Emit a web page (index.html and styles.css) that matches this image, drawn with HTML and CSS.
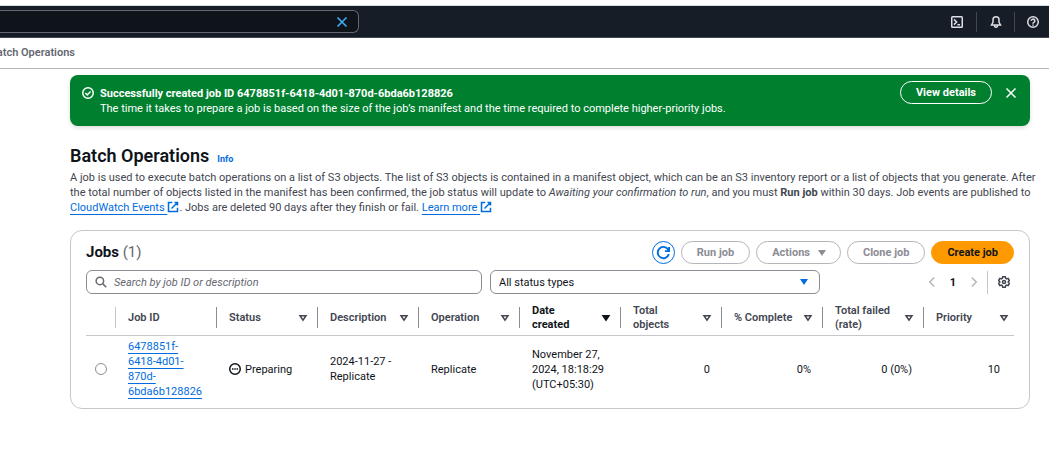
FILE: index.html
```html
<!DOCTYPE html>
<html lang="en">
<head>
<meta charset="utf-8">
<title>Batch Operations</title>
<link rel="stylesheet" href="styles.css">
</head>
<body>
<svg class="sprite" aria-hidden="true">
  <symbol id="close" viewBox="0 0 16 16"><path d="m2 2 12 12M14 2 2 14"/></symbol>
  <symbol id="external" viewBox="0 0 16 16"><path d="M10 2h4v4M6 10l8-8M14 9.050V14H2V2h5"/></symbol>
  <symbol id="sort" viewBox="0 0 16 16"><path d="M4 5h8l-4 6z"/></symbol>
  <symbol id="caret" viewBox="0 0 16 16"><path d="M4 5h8l-4 6z" fill="currentColor"/></symbol>
</svg>

<header class="topbar">
  <div class="topbar-search">
    <input class="topbar-input" type="text" aria-label="Search services">
    <button class="icon-button topbar-clear" aria-label="Clear search"><svg class="icon"><use href="#close"/></svg></button>
  </div>
  <div class="topbar-tools">
    <button class="icon-button tool" aria-label="CloudShell"><svg class="icon" viewBox="0 0 16 16"><rect x="1" y="1" width="14" height="14" rx="1"/><path d="m4 4.500 3.500 3.500L4 11.500M8.500 11.500H12"/></svg></button>
    <button class="icon-button tool" aria-label="Notifications"><svg class="icon" viewBox="0 0 16 16"><path d="M8 1a4 4 0 0 0-4 4v3.500L2 12h12l-2-3.500V5a4 4 0 0 0-4-4zM6 12v1a2 2 0 0 0 4 0v-1"/></svg></button>
    <button class="icon-button tool" aria-label="Help"><svg class="icon" viewBox="0 0 16 16"><circle cx="8" cy="8" r="7"/><path d="M5.500 6.500a2.500 2.300 0 1 1 3.700 2C8.300 9 8 9.300 8 10.200M8 11.200V13"/></svg></button>
  </div>
</header>

<nav class="breadcrumb" aria-label="Breadcrumb"><div class="breadcrumb-clip"><span>Batch Operations</span></div></nav>

<main class="content">
  <section class="flash" role="status">
    <svg class="icon flash-icon" viewBox="0 0 16 16"><circle cx="8" cy="8" r="7"/><path d="m4.500 8 2.500 2.500L11.500 6"/></svg>
    <div class="flash-text">
      <strong>Successfully created job ID 6478851f-6418-4d01-870d-6bda6b128826</strong>
      <p>The time it takes to prepare a job is based on the size of the job’s manifest and the time required to complete higher-priority jobs.</p>
    </div>
    <button class="button flash-action">View details</button>
    <button class="icon-button flash-close" aria-label="Dismiss"><svg class="icon"><use href="#close"/></svg></button>
  </section>

  <div class="page-title">
    <h1>Batch Operations</h1>
    <a class="info" href="#info">Info</a>
  </div>
  <p class="intro">A job is used to execute batch operations on a list of S3 objects. The list of S3 objects is contained in a manifest object, which can be an S3 inventory report or a list of objects that you generate. After the total number of objects listed in the manifest has been confirmed, the job status will update to <em>Awaiting your confirmation to run</em>, and you must <strong>Run job</strong> within 30 days. Job events are published to <a class="link" href="#events">CloudWatch Events <svg class="icon external"><use href="#external"/></svg></a>. Jobs are deleted 90 days after they finish or fail. <a class="link" href="#learn">Learn more <svg class="icon external"><use href="#external"/></svg></a></p>

  <section class="card">
    <div class="card-header">
      <h2>Jobs <span class="count">(1)</span></h2>
      <div class="actions">
        <button class="button refresh" aria-label="Refresh"><svg class="icon icon-refresh" viewBox="0 0 16 16"><path d="M14 2v4.500H9.500M13.700 9.500A6 6 0 1 1 13.500 6"/></svg></button>
        <button class="button" disabled>Run job</button>
        <button class="button button-menu" disabled>Actions <svg class="caret"><use href="#caret"/></svg></button>
        <button class="button" disabled>Clone job</button>
        <button class="button primary">Create job</button>
      </div>
    </div>

    <div class="filters">
      <div class="field field-search">
        <svg class="icon search-icon" viewBox="0 0 16 16"><circle cx="6.500" cy="6.500" r="5"/><path d="m10.500 10.500 4.500 4.500"/></svg>
        <input class="control" type="search" placeholder="Search by job ID or description" aria-label="Search jobs">
      </div>
      <div class="field field-select">
        <select class="control" aria-label="Status filter"><option>All status types</option></select>
        <svg class="caret select-caret"><use href="#caret"/></svg>
      </div>
      <div class="pagination">
        <button class="icon-button page-arrow" disabled aria-label="Previous page"><svg class="icon" viewBox="0 0 16 16"><path d="M11 2 5 8l6 6"/></svg></button>
        <button class="page-number">1</button>
        <button class="icon-button page-arrow" disabled aria-label="Next page"><svg class="icon" viewBox="0 0 16 16"><path d="m5 2 6 6-6 6"/></svg></button>
        <button class="icon-button settings" aria-label="Preferences"><svg class="icon" viewBox="0 0 16 16"><path d="M6.300 1h3.400l.5 2 1.300.8 2-.6 1.700 2.900L13.700 7.500v1l1.500 1.400-1.700 2.900-2-.6-1.300.8-.5 2H6.300l-.5-2-1.300-.8-2 .6L.8 9.900l1.500-1.400v-1L.8 6.100l1.700-2.900 2 .6L5.800 3z"/><circle cx="8" cy="8" r="2"/></svg></button>
      </div>
    </div>

    <table class="jobs">
      <colgroup><col class="col-pick"><col class="col"><col class="col"><col class="col"><col class="col"><col class="col"><col class="col"><col class="col"><col class="col"><col></colgroup>
      <thead>
        <tr>
          <th><div class="head"></div></th>
          <th><div class="head">Job ID</div></th>
          <th><div class="head">Status <svg class="icon sort"><use href="#sort"/></svg></div></th>
          <th><div class="head">Description <svg class="icon sort"><use href="#sort"/></svg></div></th>
          <th><div class="head">Operation <svg class="icon sort"><use href="#sort"/></svg></div></th>
          <th class="sorted" aria-sort="descending"><div class="head">Date created <svg class="icon sort"><use href="#caret"/></svg></div></th>
          <th><div class="head">Total objects <svg class="icon sort"><use href="#sort"/></svg></div></th>
          <th><div class="head">% Complete <svg class="icon sort"><use href="#sort"/></svg></div></th>
          <th><div class="head">Total failed (rate) <svg class="icon sort"><use href="#sort"/></svg></div></th>
          <th><div class="head">Priority <svg class="icon sort"><use href="#sort"/></svg></div></th>
        </tr>
      </thead>
      <tbody>
        <tr>
          <td class="pick"><input class="radio" type="radio" name="job" aria-label="Select job"></td>
          <td><a class="link" href="#job">6478851f-6418-4d01-870d-6bda6b128826</a></td>
          <td><span class="status"><svg class="icon" viewBox="0 0 16 16"><circle cx="8" cy="8" r="7"/><path d="M4 8h2M7 8h2M10 8h2"/></svg>Preparing</span></td>
          <td>2024-11-27 - Replicate</td>
          <td>Replicate</td>
          <td>November 27, 2024, 18:18:29 (UTC+05:30)</td>
          <td class="num">0</td>
          <td class="num">0%</td>
          <td class="num">0 (0%)</td>
          <td class="num">10</td>
        </tr>
      </tbody>
    </table>
  </section>
</main>
</body>
</html>
```

FILE: styles.css
```css
* { box-sizing: border-box; }
body {
  margin: 0;
  padding-top: 5px;
  background: #fff;
  color: #0f141a;
  font: 11px/15px Roboto, "Open Sans", sans-serif;
}
h1, h2, p { margin: 0; }
button, input, select { font: inherit; color: inherit; }
button { cursor: pointer; }
.sprite { position: absolute; width: 0; height: 0; }
.icon {
  flex: none;
  width: 12px;
  height: 12px;
  fill: none;
  stroke: currentColor;
  stroke-width: 2;
}
.icon-button {
  display: flex;
  align-items: center;
  justify-content: center;
  padding: 0;
  border: 0;
  background: none;
}

.topbar {
  display: flex;
  align-items: center;
  justify-content: space-between;
  height: 33px;
  border-top: 1px solid #d5dfe0;
  border-bottom: 1px solid #424650;
  background: #161d26;
}
.topbar-search {
  display: flex;
  width: 359px;
  height: 23px;
  padding-right: 10px;
  border: 1px solid #656871;
  border-left: 0;
  border-radius: 0 6px 6px 0;
  background: #0f141a;
}
.topbar-input {
  flex: 1;
  min-width: 0;
  border: 0;
  outline: 0;
  background: none;
  color: #fff;
}
.topbar-clear { color: #42b4ff; }
.topbar-tools { display: flex; padding-right: 10px; color: #dedee3; }
.tool { width: 38px; height: 20px; }
.tool + .tool { border-left: 1px solid #424650; }
.tool:last-child { width: 25px; justify-content: flex-end; }

.breadcrumb {
  height: 31px;
  padding-top: 7px;
  border-bottom: 1px solid #b4b4bb;
  color: #656871;
  font-weight: 600;
}
.breadcrumb-clip {
  display: flex;
  justify-content: flex-end;
  width: 75px;
  overflow: hidden;
  white-space: nowrap;
}

.content { padding: 6px 19px 0 70px; }
.flash {
  display: flex;
  align-items: flex-start;
  padding: 6px 12px 10px;
  border-radius: 8px;
  background: #00802f;
  color: #fff;
  box-shadow: 0 2px 4px #0002;
}
.flash-icon { margin-top: 6px; }
.flash-text { flex: 1; padding: 5px 0 0 6px; }
.flash-text strong { display: block; font-weight: 700; }
.flash-close { width: 14px; height: 23px; margin-left: 12px; }

.button {
  display: flex;
  align-items: center;
  gap: 4px;
  height: 23px;
  padding: 0 15px;
  border: 1px solid #006ce0;
  border-radius: 12px;
  background: #fff;
  font-weight: 700;
  white-space: nowrap;
}
.button:disabled { border-color: #b4b4bb; color: #8c8c94; cursor: default; }
.button.primary { border-color: #f90; background: #f90; }
.button-menu { padding-right: 10px; }
.button.refresh { justify-content: center; width: 23px; padding: 0; color: #006ce0; }
.button.flash-action { border-color: #fff; background: none; color: #fff; }
.icon-refresh { width: 15px; height: 15px; }

.page-title {
  display: flex;
  align-items: baseline;
  gap: 8px;
  margin-top: 18px;
}
h1 { font-size: 18px; line-height: 24px; font-weight: 600; }
.info { color: #006ce0; font-size: 9px; font-weight: 700; text-decoration: none; }
.intro { margin: 2px -10px 0 0; color: #424650; }
.link {
  color: #006ce0;
  text-decoration: underline;
  text-underline-offset: 3px;
}
.external { vertical-align: -2px; }

.card {
  margin-top: 15px;
  padding: 10px 15px 5px;
  border: 1px solid #c6c6cd;
  border-radius: 12px;
}
.card-header { display: flex; align-items: flex-start; justify-content: space-between; }
h2 { font-size: 15px; line-height: 22px; font-weight: 700; }
.count { color: #656871; font-weight: 400; }
.actions { display: flex; gap: 6px; }
.caret { width: 16px; height: 16px; }

.filters { display: flex; align-items: center; gap: 8px; margin-top: 6px; }
.field { position: relative; }
.field-search { flex: 396; }
.field-select { flex: 330; }
.control {
  display: block;
  width: 100%;
  height: 24px;
  padding: 0 8px;
  border: 1px solid #8c8c94;
  border-radius: 6px;
  background: #fff;
  appearance: none;
}
.field-search .control { padding-left: 27px; }
.control::placeholder { color: #656871; font-style: italic; opacity: 1; }
.search-icon { position: absolute; left: 9px; top: 6px; color: #656871; }
.select-caret { position: absolute; right: 8px; top: 4px; color: #006ce0; }
.pagination { display: flex; flex: 186; justify-content: flex-end; align-items: center; }
.page-arrow { width: 14px; height: 23px; color: #b4b4bb; }
.page-number { width: 28px; padding: 0; border: 0; background: none; font-weight: 700; }
.settings {
  width: 27px;
  height: 23px;
  margin-left: 6px;
  padding-left: 6px;
  border-left: 1px solid #c6c6cd;
  color: #424650;
}

.jobs { width: 100%; margin-top: 6px; border-collapse: separate; border-spacing: 0; table-layout: fixed; }
.col-pick { width: 30px; }
.col { width: 101px; }
th { padding: 0; border-bottom: 1px solid #c6c6cd; color: #424650; font-weight: 600; line-height: 14px; text-align: left; }
.head {
  display: flex;
  align-items: center;
  justify-content: space-between;
  gap: 6px;
  height: 21px;
  margin: 7px 0;
  padding: 0 8px 0 12px;
  border-right: 1px solid #8c8c94;
}
th:last-child .head { border-right: 0; padding-right: 4px; }
th:first-child .head { border-color: #c6c6cd; }
.sorted { color: #0f141a; font-weight: 700; }
td { padding: 3px 12px 4px; vertical-align: middle; }
td:last-child { padding-right: 14px; }
.num { text-align: right; }
.pick { padding: 3px 0 4px 9px; }
.radio {
  display: block;
  width: 12px;
  height: 12px;
  margin: 0;
  border: 1px solid #8c8c94;
  border-radius: 50%;
  appearance: none;
}
.status { display: flex; align-items: center; gap: 4px; }
```
